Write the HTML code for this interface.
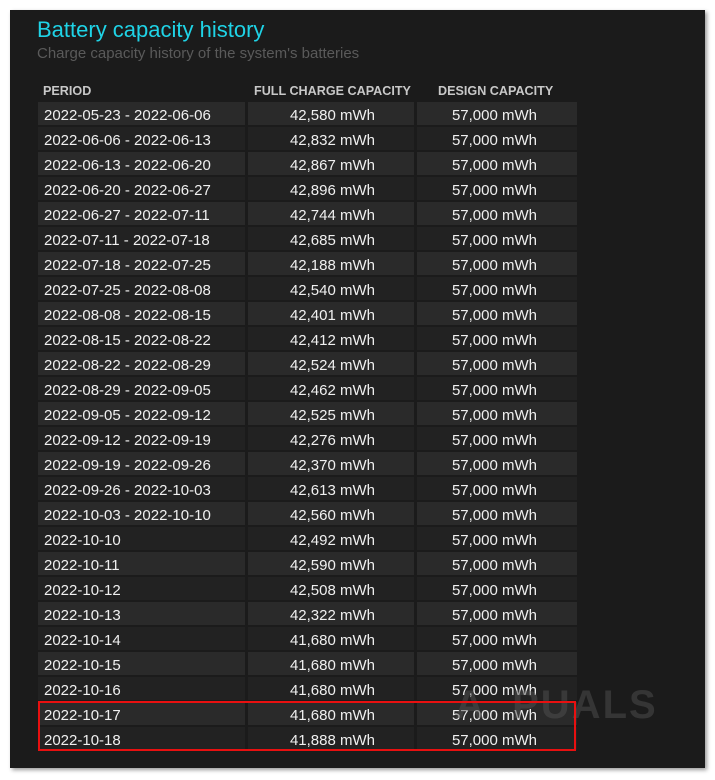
<!DOCTYPE html>
<html><head><meta charset="utf-8"><style>
body{margin:0;width:715px;height:780px;background:#fff;position:relative;overflow:hidden;font-family:"Liberation Sans",sans-serif}
#p{position:absolute;left:10px;top:10px;width:695px;height:758px;background:#1b1b1b;box-shadow:2px 2px 4px rgba(0,0,0,.4)}
h1{position:absolute;left:37px;top:17px;margin:0;font-weight:normal;font-size:22px;color:#1fd3e6}
.sub{position:absolute;left:37px;top:45px;font-size:15px;color:#5a5a5a}
.hd{position:absolute;top:84px;font-size:12.6px;font-weight:bold;color:#c8c8c8}
.c{position:absolute;height:23px;line-height:27px;font-size:15px;color:#f0f0f0;box-sizing:border-box}
.r{text-align:right}
#box{position:absolute;left:38px;top:701px;width:538px;height:50px;border:2px solid #e81010;box-sizing:border-box}
#wm{position:absolute;left:455px;top:683px;font-size:40px;font-weight:bold;color:rgba(80,80,80,.5);letter-spacing:2px}
</style></head><body>
<div id="p"></div>
<h1>Battery capacity history</h1>
<div class="sub">Charge capacity history of the system's batteries</div>
<div class="hd" style="left:43px">PERIOD</div>
<div class="hd" style="left:254px">FULL CHARGE CAPACITY</div>
<div class="hd" style="left:438px">DESIGN CAPACITY</div>
<div id="rows"></div>
<div id="wm">A&nbsp;&nbsp;PUALS</div>
<div id="box"></div>
<script>
var d=[["2022-05-23 - 2022-06-06","42,580"],["2022-06-06 - 2022-06-13","42,832"],["2022-06-13 - 2022-06-20","42,867"],["2022-06-20 - 2022-06-27","42,896"],["2022-06-27 - 2022-07-11","42,744"],["2022-07-11 - 2022-07-18","42,685"],["2022-07-18 - 2022-07-25","42,188"],["2022-07-25 - 2022-08-08","42,540"],["2022-08-08 - 2022-08-15","42,401"],["2022-08-15 - 2022-08-22","42,412"],["2022-08-22 - 2022-08-29","42,524"],["2022-08-29 - 2022-09-05","42,462"],["2022-09-05 - 2022-09-12","42,525"],["2022-09-12 - 2022-09-19","42,276"],["2022-09-19 - 2022-09-26","42,370"],["2022-09-26 - 2022-10-03","42,613"],["2022-10-03 - 2022-10-10","42,560"],["2022-10-10","42,492"],["2022-10-11","42,590"],["2022-10-12","42,508"],["2022-10-13","42,322"],["2022-10-14","41,680"],["2022-10-15","41,680"],["2022-10-16","41,680"],["2022-10-17","41,680"],["2022-10-18","41,888"]];
var h="";d.forEach(function(r,i){var t=102+25*i,bg=i%2?"#222222":"#2a2a2a";
h+='<div class="c" style="left:38px;width:207px;top:'+t+'px;background:'+bg+';padding-left:6px">'+r[0]+'</div>';
h+='<div class="c r" style="left:248px;width:166px;top:'+t+'px;background:'+bg+';padding-right:39px">'+r[1]+' mWh</div>';
h+='<div class="c r" style="left:417px;width:160px;top:'+t+'px;background:'+bg+';padding-right:40px">57,000 mWh</div>';});
document.getElementById("rows").innerHTML=h;
</script>
</body></html>
